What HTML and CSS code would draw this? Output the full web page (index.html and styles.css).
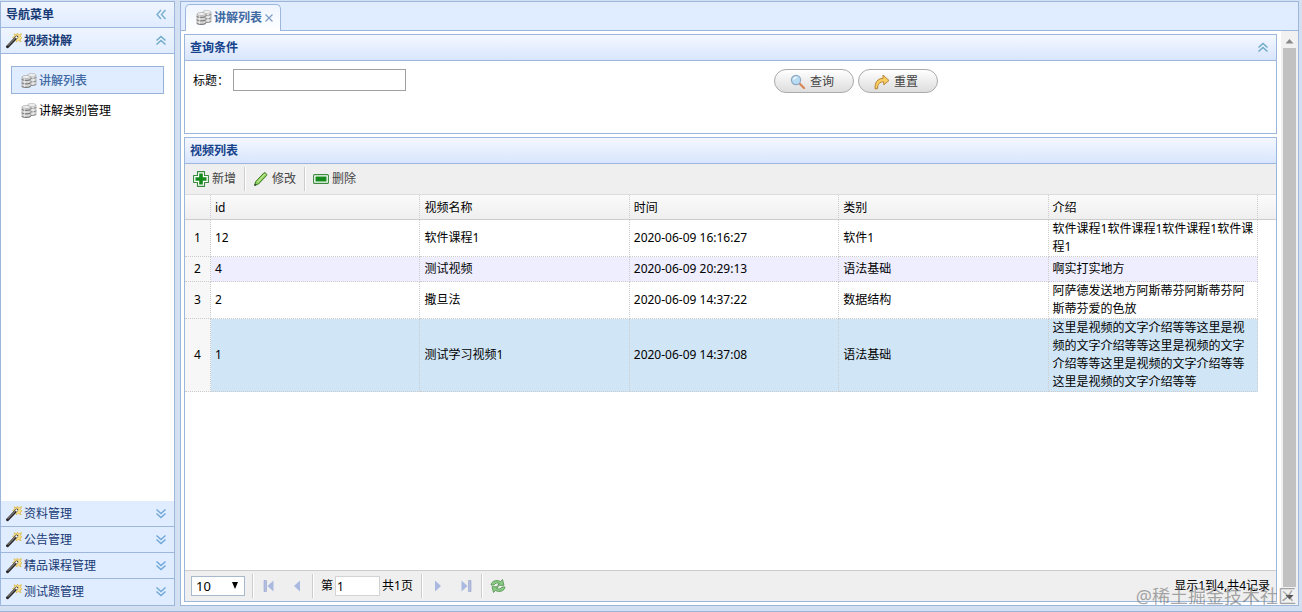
FILE: index.html
```html
<!DOCTYPE html>
<html lang="zh-CN">
<head>
    <meta charset="UTF-8">
    <meta name="viewport" content="width=device-width, initial-scale=1.0">
    <title>讲解列表</title>
    <link rel="stylesheet" href="styles.css">
</head>
<body>
    <!-- shared icons -->
    <svg class="sprite" aria-hidden="true">
        <symbol id="i-wand" viewBox="0 0 16 16">
            <path d="M11.500 0l.9 2L15.500.6 14.500 3.400 16 5l-1.800.9.8 3-2.800-1.600L10.500 9 9 5.500 6.500 4.500 9 3 8 .8l2.500 1z" fill="#f8e38c" stroke="#dcb548" stroke-width=".7"/>
            <path d="M1.500 13.800L10.800 4.100" stroke="#2a2626" stroke-width="2.900" stroke-linecap="round"/>
            <path d="M1.800 12.800L10 4.300" stroke="#b9b4ae" stroke-width=".9"/>
            <path d="M9.900 5l1.300-1.300" stroke="#fff" stroke-width="2.200"/>
        </symbol>
        <symbol id="i-db" viewBox="0 0 16 16">
            <path d="M6.500 2v9.500c0 1.500 8.500 1.500 8.500 0V2z" fill="#dcdcdc"/>
            <ellipse cx="10.750" cy="2" rx="4.250" ry="1.500" fill="#f2f2f2" stroke="#aaa" stroke-width=".6"/>
            <path d="M6.500 4c0 1.800 8.500 1.800 8.500 0M6.500 7.500c0 1.800 8.500 1.800 8.500 0M6.500 11c0 1.800 8.500 1.800 8.500 0" fill="none" stroke="#8a8a8a" stroke-width="1.100"/>
            <path d="M1 4v9c0 1.800 8.500 1.800 8.500 0V4z" fill="#d6d6d6"/>
            <ellipse cx="5.250" cy="4" rx="4.250" ry="1.500" fill="#f2f2f2" stroke="#999" stroke-width=".6"/>
            <path d="M1 6c0 1.800 8.500 1.800 8.500 0M1 9.500c0 1.800 8.500 1.800 8.500 0M1 13c0 1.800 8.500 1.800 8.500 0" fill="none" stroke="#767676" stroke-width="1.200"/>
            <path d="M1 4v9M9.500 4v9M15 2v9" stroke="#a5a5a5" stroke-width=".7"/>
            <path d="M3.500 5.500V14M12 3.500V12" stroke="#fff" stroke-width="1.400" opacity=".5"/>
        </symbol>
        <symbol id="i-up" viewBox="0 0 16 16">
            <path d="M3.500 7.500L8 3.500l4.500 4M3.500 11.500L8 7.500l4.500 4" fill="none" stroke="#6fabc9" stroke-width="1.500"/>
        </symbol>
        <symbol id="i-down" viewBox="0 0 16 16">
            <path d="M3.500 3.500l4.500 4 4.500-4M3.500 7.500l4.500 4 4.500-4" fill="none" stroke="#6fa8d8" stroke-width="1.400"/>
        </symbol>
        <symbol id="i-left" viewBox="0 0 16 16">
            <path d="M8 3L4 7.500 8 12M12.500 3l-4 4.500 4 4.500" fill="none" stroke="#78aed0" stroke-width="1.400"/>
        </symbol>
    </svg>

    <div class="layout">
        <aside class="sidebar">
            <div class="panel-header">
                <span class="title">导航菜单</span>
                <svg class="icon"><use href="#i-left"/></svg>
            </div>
            <div class="panel-header">
                <svg class="icon"><use href="#i-wand"/></svg>
                <span class="title">视频讲解</span>
                <svg class="icon"><use href="#i-up"/></svg>
            </div>
            <nav class="menu">
                <a href="#" class="menu-item active"><svg class="icon"><use href="#i-db"/></svg>讲解列表</a>
                <a href="#" class="menu-item"><svg class="icon"><use href="#i-db"/></svg>讲解类别管理</a>
            </nav>
            <div class="accordion-header">
                <svg class="icon"><use href="#i-wand"/></svg>
                <span class="title">资料管理</span>
                <svg class="icon"><use href="#i-down"/></svg>
            </div>
            <div class="accordion-header">
                <svg class="icon"><use href="#i-wand"/></svg>
                <span class="title">公告管理</span>
                <svg class="icon"><use href="#i-down"/></svg>
            </div>
            <div class="accordion-header">
                <svg class="icon"><use href="#i-wand"/></svg>
                <span class="title">精品课程管理</span>
                <svg class="icon"><use href="#i-down"/></svg>
            </div>
            <div class="accordion-header">
                <svg class="icon"><use href="#i-wand"/></svg>
                <span class="title">测试题管理</span>
                <svg class="icon"><use href="#i-down"/></svg>
            </div>
        </aside>

        <main class="main">
            <div class="tabs">
                <a href="#" class="tab">
                    <svg class="icon"><use href="#i-db"/></svg>
                    <span>讲解列表</span>
                    <svg class="tab-close" viewBox="0 0 10 10"><path d="M1.500 1.500l7 7M8.500 1.500l-7 7" stroke="#7b9cc0" stroke-width="1.200"/></svg>
                </a>
            </div>
            <div class="tab-body">
                <div class="content">
                    <section class="panel">
                        <div class="panel-header">
                            <span class="title">查询条件</span>
                            <svg class="icon"><use href="#i-up"/></svg>
                        </div>
                        <form class="query">
                            <div class="field">
                                <label for="title">标题：</label>
                                <input type="text" id="title" name="title">
                            </div>
                            <div class="query-buttons">
                                <button type="button" class="btn">
                                    <svg class="icon" viewBox="0 0 16 16">
                                        <path d="M9.500 9.500l4.500 4.500" stroke="#d98a5c" stroke-width="2.400" stroke-linecap="round"/>
                                        <circle cx="6" cy="6" r="4.600" fill="#b9dcf5" stroke="#8fa9c4" stroke-width="1.200"/>
                                        <path d="M3.500 5.500a3 3 0 0 1 3-2.200" fill="none" stroke="#fff" stroke-width="1.200"/>
                                    </svg>
                                    查询
                                </button>
                                <button type="reset" class="btn">
                                    <svg class="icon" viewBox="0 0 16 16">
                                        <path d="M1.200 15C.5 8.500 3.500 4.500 9 4.300V1l6 5.500-5.200 4.300-.3-3C6 7.800 3.500 10 3.600 14.600z" fill="#f7cd62" stroke="#b07a2c" stroke-width=".9" stroke-linejoin="round"/>
                                    </svg>
                                    重置
                                </button>
                            </div>
                        </form>
                    </section>

                    <section class="panel grid-panel">
                        <div class="panel-header">
                            <span class="title">视频列表</span>
                        </div>
                        <div class="toolbar">
                            <button type="button" class="tool">
                                <svg class="icon" viewBox="0 0 16 16">
                                    <path d="M4.500.6h7v3.900h3.900v7h-3.900v3.900h-7v-3.900H.6v-7h3.900z" fill="#fff" stroke="#3b8a3e" stroke-width="1.100" stroke-linejoin="round"/>
                                    <path d="M8 2.500v11M2.500 8h11" stroke="#158a1c" stroke-width="3.600"/>
                                </svg>
                                新增
                            </button>
                            <span class="separator"></span>
                            <button type="button" class="tool">
                                <svg class="icon" viewBox="0 0 16 16">
                                    <path d="M1.500 14.500l1.200-4L11 1.800c.8-.8 3.500 1.500 2.700 2.600L5.500 13z" fill="#8fd05c" stroke="#3f7d28" stroke-width="1"/>
                                    <path d="M4.500 11L12 3.200" stroke="#d5f3b4" stroke-width="1"/>
                                    <path d="M1.300 14.800l.7-2.200 1.600 1.400z" fill="#333"/>
                                </svg>
                                修改
                            </button>
                            <span class="separator"></span>
                            <button type="button" class="tool">
                                <svg class="icon" viewBox="0 0 16 16">
                                    <rect x=".6" y="3.600" width="14.800" height="8.800" rx="1" fill="#fff" stroke="#3b8a3e" stroke-width="1.100"/>
                                    <rect x="2.500" y="5.500" width="11" height="5" fill="#158a1c"/>
                                </svg>
                                删除
                            </button>
                        </div>
                        <div class="grid-view">
                            <table class="datagrid">
                                <thead>
                                    <tr>
                                        <th class="rownum"></th>
                                        <th>id</th>
                                        <th>视频名称</th>
                                        <th>时间</th>
                                        <th>类别</th>
                                        <th>介绍</th>
                                        <th class="filler"></th>
                                    </tr>
                                </thead>
                                <tbody>
                                    <tr>
                                        <td class="rownum">1</td>
                                        <td>12</td>
                                        <td>软件课程1</td>
                                        <td>2020-06-09 16:16:27</td>
                                        <td>软件1</td>
                                        <td>软件课程1软件课程1软件课程1软件课程1</td>
                                        <td class="filler"></td>
                                    </tr>
                                    <tr class="alt">
                                        <td class="rownum">2</td>
                                        <td>4</td>
                                        <td>测试视频</td>
                                        <td>2020-06-09 20:29:13</td>
                                        <td>语法基础</td>
                                        <td>啊实打实地方</td>
                                        <td class="filler"></td>
                                    </tr>
                                    <tr>
                                        <td class="rownum">3</td>
                                        <td>2</td>
                                        <td>撒旦法</td>
                                        <td>2020-06-09 14:37:22</td>
                                        <td>数据结构</td>
                                        <td>阿萨德发送地方阿斯蒂芬阿斯蒂芬阿斯蒂芬爱的色放</td>
                                        <td class="filler"></td>
                                    </tr>
                                    <tr class="selected">
                                        <td class="rownum">4</td>
                                        <td>1</td>
                                        <td>测试学习视频1</td>
                                        <td>2020-06-09 14:37:08</td>
                                        <td>语法基础</td>
                                        <td>这里是视频的文字介绍等等这里是视频的文字介绍等等这里是视频的文字介绍等等这里是视频的文字介绍等等这里是视频的文字介绍等等</td>
                                        <td class="filler"></td>
                                    </tr>
                                </tbody>
                            </table>
                        </div>
                        <div class="pager">
                            <div class="page-size">
                                <select aria-label="每页条数">
                                    <option>10</option>
                                    <option>20</option>
                                    <option>50</option>
                                </select>
                            </div>
                            <span class="separator"></span>
                            <button type="button" class="page-btn" aria-label="首页">
                                <svg class="icon" viewBox="0 0 16 16"><path d="M3 2.500h2.500v11H3z" fill="#b4bfdf" stroke="#93a2cd" stroke-width=".6"/><path d="M12.500 2.500v11L6.500 8z" fill="#a9b9e0"/></svg>
                            </button>
                            <button type="button" class="page-btn" aria-label="上一页">
                                <svg class="icon" viewBox="0 0 16 16"><path d="M11 2.500v11L5 8z" fill="#a9b9e0"/></svg>
                            </button>
                            <span class="separator"></span>
                            <label class="page-num">第<input type="text" value="1"></label>
                            <span class="page-total">共1页</span>
                            <span class="separator"></span>
                            <button type="button" class="page-btn" aria-label="下一页">
                                <svg class="icon" viewBox="0 0 16 16"><path d="M5 2.500v11L11 8z" fill="#a9b9e0"/></svg>
                            </button>
                            <button type="button" class="page-btn" aria-label="末页">
                                <svg class="icon" viewBox="0 0 16 16"><path d="M10.500 2.500H13v11h-2.500z" fill="#b4bfdf" stroke="#93a2cd" stroke-width=".6"/><path d="M3.500 2.500v11l6-5.500z" fill="#a9b9e0"/></svg>
                            </button>
                            <span class="separator"></span>
                            <button type="button" class="page-btn" aria-label="刷新">
                                <svg class="icon" viewBox="0 0 16 16">
                                    <path d="M1 7C1.500 3 6.500 1.300 10.500 3.500L12.500 1.500l1.500 5.800H7.500l2-1.700C7.500 4.500 5 5 4 7z" fill="#8acb84" stroke="#4f8f4c" stroke-width=".8" stroke-linejoin="round"/>
                                    <path d="M15 9c-.5 4-5.500 5.700-9.500 3.500l-2 2L2 8.700h6.500l-2 1.700C8.500 11.500 11 11 12 9z" fill="#8acb84" stroke="#4f8f4c" stroke-width=".8" stroke-linejoin="round"/>
                                </svg>
                            </button>
                            <span class="page-info">显示1到4,共4记录</span>
                        </div>
                    </section>
                </div>
                <div class="scrollbar">
                    <svg viewBox="0 0 17 12"><path d="M4.500 8.500l4-4.500 4 4.500z" fill="#888"/></svg>
                    <div class="thumb"></div>
                    <svg viewBox="0 0 17 17"><path d="M4.500 7l4 4.500 4-4.500z" fill="#505050"/></svg>
                </div>
            </div>
        </main>
    </div>
    <div class="watermark">@稀土掘金技术社区</div>
</body>
</html>
```

FILE: styles.css
```css
* {
    box-sizing: border-box;
}
body {
    margin: 0;
    height: 100vh;
    padding: 1px 3px 5px 0;
    background: #d2e0f2;
    border-bottom: 1px solid #99b3d8;
    font: 12px/18px "Noto Sans", "Noto Sans CJK SC", sans-serif;
    color: #000;
}
input, select, button {
    font: inherit;
    color: inherit;
}
a {
    color: inherit;
    text-decoration: none;
}
.sprite {
    position: absolute;
    width: 0;
    height: 0;
}
.icon {
    width: 16px;
    height: 16px;
    flex: none;
}
.layout {
    display: flex;
    gap: 5px;
    height: 100%;
}

/* left menu */
.sidebar {
    width: 175px;
    flex: none;
    display: flex;
    flex-direction: column;
    background: #fff;
    border: 1px solid #9db6dc;
}
.panel-header, .accordion-header {
    display: flex;
    align-items: center;
    height: 26px;
    flex: none;
    padding: 0 5px;
    border-bottom: 1px solid #9db6dc;
    color: #173a75;
}
.panel-header {
    background: linear-gradient(to bottom, #eff5ff, #e0ecff);
    font-weight: bold;
}
.accordion-header {
    background: #e0ecff;
}
.accordion-header:last-child {
    border-bottom: none;
}
.title {
    flex: 1;
}
.icon + .title {
    padding-left: 2px;
}
.menu {
    flex: 1;
    padding: 12px 10px;
}
.menu-item {
    display: flex;
    align-items: center;
    gap: 2px;
    height: 28px;
    margin-bottom: 2px;
    padding: 1px 9px 0;
    border: 1px solid transparent;
}
.menu-item.active {
    background: #e0ecff;
    border-color: #99b3d8;
    color: #416aa3;
    font-weight: 500;
}

/* tabs */
.main {
    flex: 1;
    min-width: 0;
    display: flex;
    flex-direction: column;
    background: #fff;
    border: 1px solid #9db6dc;
}
.tabs {
    display: flex;
    align-items: flex-end;
    height: 29px;
    flex: none;
    padding-left: 4px;
    background: #e0ecff;
    border-bottom: 1px solid #9db6dc;
}
.tab {
    display: flex;
    align-items: center;
    gap: 2px;
    height: 27px;
    margin-bottom: -1px;
    padding: 0 6px 0 10px;
    border: 1px solid #9db6dc;
    border-bottom: none;
    border-radius: 5px 5px 0 0;
    background: linear-gradient(to bottom, #eff5ff, #fff);
    color: #416aa3;
    font-weight: bold;
}
.tab-close {
    width: 10px;
    height: 10px;
}
.tab-body {
    flex: 1;
    min-height: 0;
    display: flex;
    gap: 4px;
}
.content {
    flex: 1;
    min-width: 0;
    display: flex;
    flex-direction: column;
    gap: 3px;
    padding: 3px 0 3px 3px;
}
.scrollbar {
    width: 17px;
    display: flex;
    flex-direction: column;
    background: #f1f1f1;
    padding-top: 4px;
}
.scrollbar .thumb {
    flex: 1;
    margin: 1px 2px;
    background: #c1c1c1;
}

/* panels */
.panel {
    border: 1px solid #9db6dc;
    background: #fff;
}
.panel .panel-header {
    background: linear-gradient(to bottom, #f4f8ff, #d8e5fd);
    color: #15428b;
}
.query {
    display: flex;
    height: 72px;
    padding-top: 8px;
}
.field {
    width: 54%;
    padding-left: 8px;
}
.field label {
    display: inline-block;
    width: 37px;
}
.field input {
    width: 173px;
    height: 22px;
    border: 1px solid #a0a0a0;
    padding: 0 2px;
}
.query-buttons {
    display: flex;
    gap: 4px;
}
.btn {
    display: flex;
    align-items: center;
    justify-content: center;
    gap: 4px;
    width: 80px;
    height: 24px;
    padding: 1px 4px 0 0;
    border: 1px solid #aaa;
    border-radius: 12px;
    background: linear-gradient(to bottom, #fff, #ddd);
    color: #444;
    cursor: pointer;
}
.btn:hover {
    background: #e6e6e6;
}

/* data grid */
.grid-panel {
    flex: 1;
    min-height: 0;
    display: flex;
    flex-direction: column;
}
.toolbar {
    display: flex;
    align-items: center;
    height: 31px;
    flex: none;
    padding: 0 2px;
    background: #efefef;
    border-bottom: 1px solid #ddd;
}
.tool {
    display: flex;
    align-items: center;
    gap: 3px;
    height: 26px;
    padding: 0 7px 0 6px;
    border: none;
    background: none;
    color: #444;
    cursor: pointer;
}
.separator {
    width: 2px;
    height: 24px;
    margin: 0 1px;
    border-left: 1px solid #ccc;
    border-right: 1px solid #fff;
}
.grid-view {
    flex: 1;
    overflow: hidden;
}
.datagrid {
    width: 100%;
    table-layout: fixed;
    border-collapse: separate;
    border-spacing: 0;
}
.datagrid th {
    height: 25px;
    padding: 2px 4px 0;
    background: linear-gradient(to bottom, #fbfbfb, #efefef);
    border-right: 1px dotted #ccc;
    border-bottom: 1px solid #ccc;
    font-weight: normal;
    text-align: left;
}
.datagrid td {
    height: 25px;
    padding: 0 2px 0 4px;
    border-right: 1px dotted #ccc;
    border-bottom: 1px dotted #ccc;
    word-break: break-all;
}
.datagrid .rownum {
    width: 26px;
    padding: 0;
    text-align: center;
}
.datagrid .filler {
    width: 18px;
    padding: 0;
    border-right: none;
}
.datagrid td.filler {
    border-bottom: none;
}
.alt td:not(.filler) {
    background: #eeeeff;
}
.selected td:not(.filler) {
    background: #d0e5f5;
}
.datagrid tr td.rownum {
    background: #f7f7f7;
}

/* pager */
.pager {
    display: flex;
    align-items: center;
    height: 31px;
    flex: none;
    padding: 0 6px;
    background: #efefef;
    border-top: 1px solid #ccc;
}
.page-size {
    position: relative;
    margin-right: 6px;
}
.page-size::after {
    content: "";
    position: absolute;
    right: 7px;
    top: 6px;
    border: 3px solid transparent;
    border-top: 7px solid #000;
    border-bottom: none;
    pointer-events: none;
}
.page-size select {
    display: block;
    width: 54px;
    height: 20px;
    padding: 0 4px;
    border: 1px solid #a9b9cc;
    border-radius: 0;
    background: #fff;
    appearance: none;
    font-size: 13px;
    line-height: 18px;
}
.page-btn {
    display: flex;
    align-items: center;
    justify-content: center;
    width: 28px;
    height: 26px;
    padding: 0;
    border: none;
    background: none;
}
.page-num {
    display: flex;
    align-items: center;
    padding-left: 6px;
}
.page-num input {
    width: 45px;
    height: 20px;
    margin: 0 2px;
    padding: 0 1px;
    border: 1px solid #d3d3d3;
}
.page-total {
    margin-right: 7px;
}
.page-info {
    margin-left: auto;
}

.watermark {
    position: absolute;
    right: 6px;
    bottom: 4px;
    font-size: 18px;
    line-height: 24px;
    color: rgba(110, 110, 110, 0.6);
    pointer-events: none;
}
```
